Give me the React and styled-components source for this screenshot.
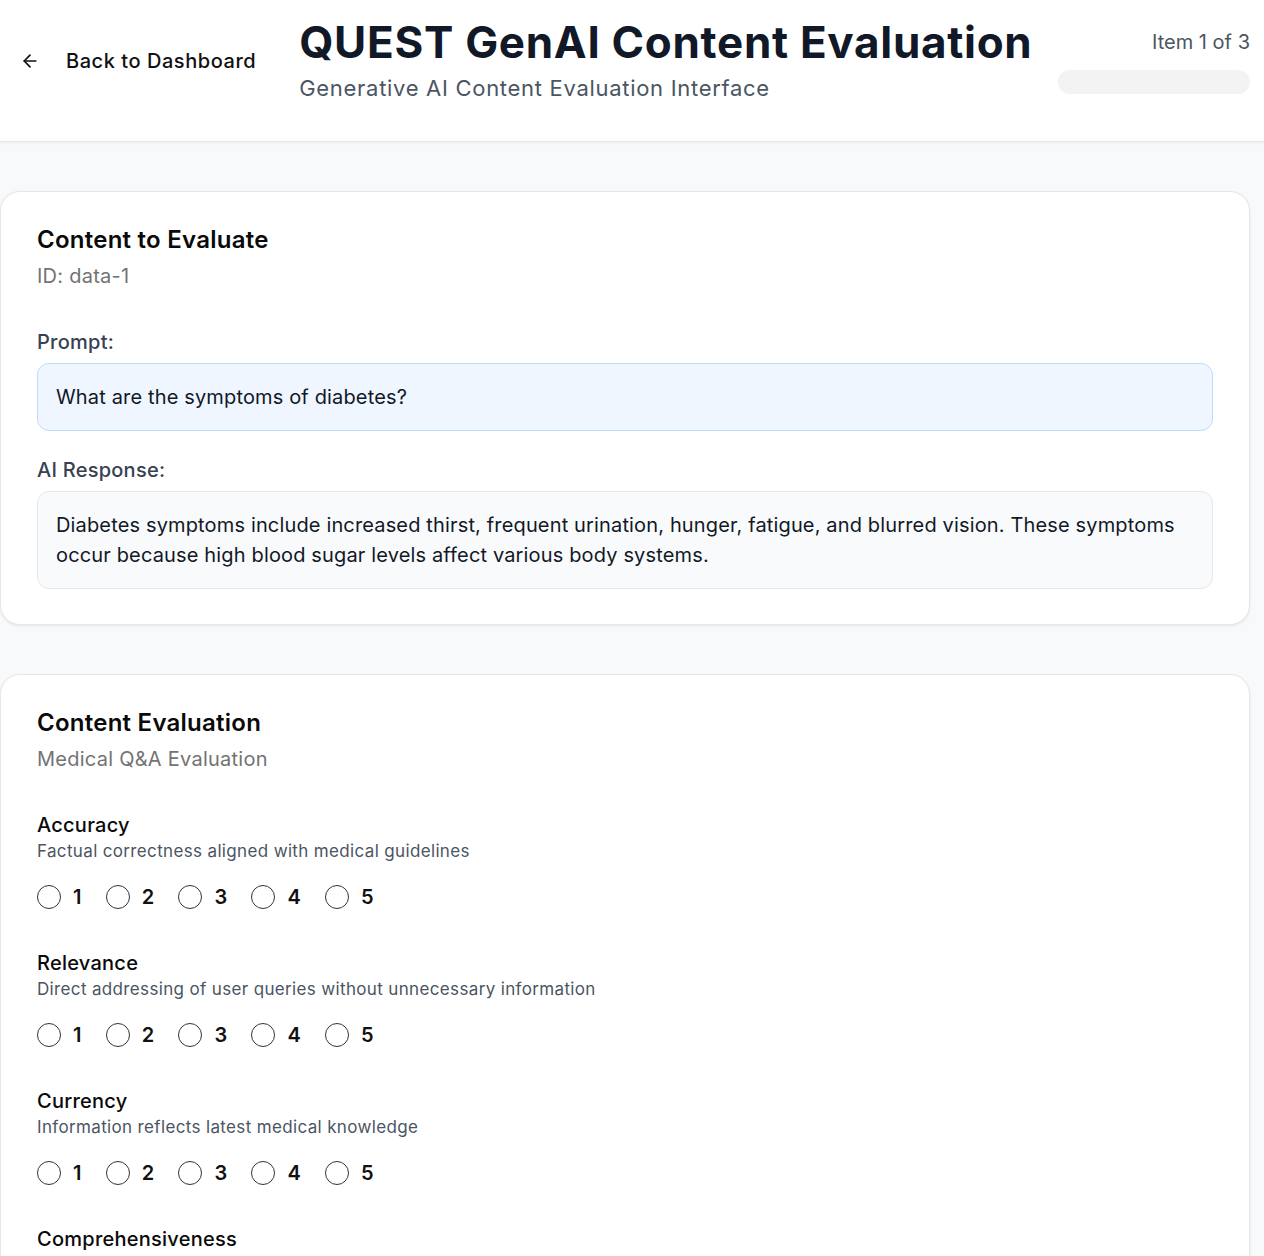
import React, { useState } from "react";
import styled, { createGlobalStyle } from "styled-components";

const GlobalStyle = createGlobalStyle`
  * { box-sizing: border-box; }
  body {
    margin: 0;
    background: #f8f9fb;
    font-family: Inter, "Noto Sans", sans-serif;
    color: #111827;
    letter-spacing: 0.25px;
  }
`;

const criteria = [
  { name: "Accuracy", desc: "Factual correctness aligned with medical guidelines" },
  { name: "Relevance", desc: "Direct addressing of user queries without unnecessary information" },
  { name: "Currency", desc: "Information reflects latest medical knowledge" },
  { name: "Comprehensiveness", desc: "Covers all relevant aspects of the question" },
];

const App = () => {
  const [scores, setScores] = useState({});

  return (
    <>
      <GlobalStyle />
      <Header>
        <BackButton>
          <svg width="20" height="20" viewBox="0 0 24 24" fill="none" stroke="#111" strokeWidth="2" strokeLinecap="round" strokeLinejoin="round">
            <path d="M19 12H5" />
            <path d="M12 19l-7-7 7-7" />
          </svg>
          Back to Dashboard
        </BackButton>
        <TitleBlock>
          <Title>QUEST GenAI Content Evaluation</Title>
          <Subtitle>Generative AI Content Evaluation Interface</Subtitle>
        </TitleBlock>
        <Progress>
          <ItemCount>Item 1 of 3</ItemCount>
          <Track />
        </Progress>
      </Header>

      <Main>
        <Card>
          <CardTitle>Content to Evaluate</CardTitle>
          <CardSub>ID: data-1</CardSub>
          <Section>
            <FieldLabel>Prompt:</FieldLabel>
            <TextBox tone="blue">What are the symptoms of diabetes?</TextBox>
          </Section>
          <Section spaced>
            <FieldLabel>AI Response:</FieldLabel>
            <TextBox>
              Diabetes symptoms include increased thirst, frequent urination, hunger, fatigue, and blurred vision. These symptoms occur because high blood sugar levels affect various body systems.
            </TextBox>
          </Section>
        </Card>

        <Card>
          <CardTitle>Content Evaluation</CardTitle>
          <CardSub>Medical Q&amp;A Evaluation</CardSub>
          {criteria.map((c) => (
            <Criterion key={c.name}>
              <CriterionName>{c.name}</CriterionName>
              <CriterionDesc>{c.desc}</CriterionDesc>
              <RadioRow>
                {[1, 2, 3, 4, 5].map((n) => (
                  <RadioOption key={n}>
                    <Radio
                      type="radio"
                      name={c.name}
                      checked={scores[c.name] === n}
                      onChange={() => setScores({ ...scores, [c.name]: n })}
                    />
                    {n}
                  </RadioOption>
                ))}
              </RadioRow>
            </Criterion>
          ))}
        </Card>
      </Main>
    </>
  );
};

export default App;

const Header = styled.header`
  height: 142px;
  background: #fff;
  border-bottom: 1px solid #e5e7eb;
  box-shadow: 0 1px 3px rgba(0, 0, 0, 0.06);
  display: flex;
  align-items: flex-start;
  padding: 14px 14px 0 20px;
`;

const BackButton = styled.button`
  display: flex;
  align-items: center;
  gap: 26px;
  margin-top: 35px;
  padding: 0;
  border: none;
  background: none;
  font-family: inherit;
  font-size: 20px;
  font-weight: 500;
  letter-spacing: 0.55px;
  color: #111;
  cursor: pointer;
  white-space: nowrap;
`;

const TitleBlock = styled.div`
  flex: 1;
  margin-left: 43px;
`;

const Title = styled.h1`
  margin: 0;
  font-size: 44px;
  line-height: 56px;
  font-weight: 700;
  color: #111827;
  letter-spacing: 0.7px;
`;

const Subtitle = styled.p`
  margin: 2px 0 0;
  font-size: 22px;
  line-height: 32px;
  color: #4b5563;
  letter-spacing: 0.7px;
`;

const Progress = styled.div`
  width: 192px;
  display: flex;
  flex-direction: column;
  align-items: flex-end;
  padding-top: 14px;
`;

const ItemCount = styled.span`
  font-size: 20px;
  line-height: 28px;
  color: #4b5563;
  letter-spacing: 0;
`;

const Track = styled.div`
  margin-top: 14px;
  width: 100%;
  height: 24px;
  border-radius: 12px;
  background: #f3f3f4;
`;

const Main = styled.main`
  padding: 49px 14px 48px 0;
  display: flex;
  flex-direction: column;
  gap: 49px;
`;

const Card = styled.section`
  background: #fff;
  border: 1px solid #e5e7eb;
  border-radius: 20px;
  box-shadow: 0 1px 3px rgba(0, 0, 0, 0.08);
  padding: 36px 36px 35px 36px;
`;

const CardTitle = styled.h2`
  margin: 0;
  font-size: 24px;
  line-height: 24px;
  font-weight: 600;
  color: #0a0a0a;
`;

const CardSub = styled.p`
  margin: 10px 0 0;
  font-size: 20px;
  line-height: 28px;
  color: #737373;
`;

const Section = styled.div`
  margin-top: ${(p) => (p.spaced ? "25px" : "38px")};
`;

const FieldLabel = styled.div`
  font-size: 20px;
  line-height: 28px;
  font-weight: 500;
  color: #374151;
  margin-bottom: 7px;
`;

const TextBox = styled.div`
  padding: 18px 18px;
  border-radius: 12px;
  font-size: 20px;
  line-height: 30px;
  letter-spacing: 0.15px;
  color: #111827;
  background: ${(p) => (p.tone === "blue" ? "#eff6ff" : "#f9fafb")};
  border: 1px solid ${(p) => (p.tone === "blue" ? "#bfdbfe" : "#e5e7eb")};
`;

const Criterion = styled.div`
  margin-top: 38px;
  & + & {
    margin-top: 40px;
  }
`;

const CriterionName = styled.div`
  font-size: 20px;
  line-height: 28px;
  font-weight: 500;
  color: #0a0a0a;
`;

const CriterionDesc = styled.div`
  font-size: 17px;
  line-height: 24px;
  color: #4b5563;
  letter-spacing: 0.35px;
`;

const RadioRow = styled.div`
  display: flex;
  gap: 24px;
  margin-top: 22px;
`;

const RadioOption = styled.label`
  display: flex;
  align-items: center;
  gap: 12px;
  font-size: 20px;
  font-weight: 600;
  color: #111;
  cursor: pointer;
`;

const Radio = styled.input`
  appearance: none;
  margin: 0;
  width: 24px;
  height: 24px;
  border: 1.3px solid #333;
  border-radius: 50%;
  background: #fff;
  cursor: pointer;

  &:checked {
    background: radial-gradient(circle, #111827 0 5px, #fff 6px);
  }
`;
